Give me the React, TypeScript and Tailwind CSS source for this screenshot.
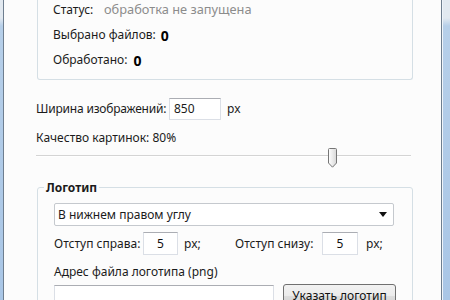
import React from "react";

const font = { fontFamily: '"Noto Sans", "Open Sans", sans-serif' };

function Thumb() {
  return (
    <svg width="11" height="20" viewBox="0 0 11 20" className="block">
      <defs>
        <linearGradient id="tg" x1="0" x2="1" y1="0" y2="0">
          <stop offset="0" stopColor="#ffffff" />
          <stop offset="1" stopColor="#d8d8d8" />
        </linearGradient>
      </defs>
      <path d="M1.5 1.5 Q1.5 0.5 2.5 0.5 H8.5 Q9.5 0.5 9.5 1.5 V15 L5.5 19.2 L1.5 15 Z" fill="url(#tg)" stroke="#767676" strokeWidth="1" />
    </svg>
  );
}

function TextBox({ w, value, center }: { w: string; value?: string; center?: boolean }) {
  return (
    <div
      className={`${w} shrink-0 h-[23px] border border-[#dbdfe6] border-t-[#abadb3] bg-white flex items-center ${center ? "justify-center" : "pl-[3px]"} text-[12px] text-[#111]`}
    >
      {value}
    </div>
  );
}

export default function App() {
  return (
    <div className="w-[450px] h-[300px] flex overflow-hidden text-[12px] text-[#1b1b1b] whitespace-nowrap" style={font}>
      <div className="w-[3px] shrink-0 h-full bg-[linear-gradient(to_bottom,#e2e9f0_0px,#e2e9f0_18px,#b6cfe9_26px,#a9c6e6_300px)]" />
      <div className="w-px shrink-0 h-full bg-[#6e7e8f]" />
      <div className="flex-1 h-full bg-[#fcfcfc] pl-[33px] pr-[28px] overflow-hidden">
        {/* status group */}
        <div className="w-[376px] border border-t-0 border-[#d5dfe5] rounded-b-[3px] pl-[15px] pb-[9px] flex flex-col gap-[5px]">
          <div className="h-[20px] flex items-center">
            <span className="w-[51px]">Статус:</span>
            <span className="text-[#8c8c8c] text-[12.8px]">обработка не запущена</span>
          </div>
          <div className="h-[20px] flex items-center">
            <span>Выбрано файлов:</span>
            <span className="ml-[5px] font-bold text-[14px] text-black">0</span>
          </div>
          <div className="h-[20px] flex items-center">
            <span>Обработано:</span>
            <span className="ml-[6px] font-bold text-[14px] text-black">0</span>
          </div>
        </div>

        {/* width */}
        <div className="mt-[18px] h-[22px] flex items-center -ml-px">
          <span className="w-[133px] shrink-0 tracking-[-0.2px]">Ширина изображений:</span>
          <div className="w-[52px] shrink-0 h-[22px] border border-[#dbdfe6] border-t-[#abadb3] bg-white flex items-center pl-[4px]">850</div>
          <span className="ml-[6px]">px</span>
        </div>

        <div className="mt-[10px] h-[16px] leading-[16px] -ml-px">Качество картинок: 80%</div>

        {/* slider */}
        <div className="mt-[2px] h-[20px] w-[375px] -ml-px relative">
          <div className="absolute left-0 right-0 top-[7px] h-[2px] bg-[#d4d4d4] border-b border-white" />
          <div className="absolute left-[291px] top-0">
            <Thumb />
          </div>
        </div>

        {/* logo group */}
        <fieldset className="mt-[12px] w-[376px] border border-[#d5dfe5] rounded-[3px]">
          <legend className="ml-[6px] px-[2px] font-bold text-[12px] leading-[15px] text-[#1b1b1b]">Логотип</legend>
          <div className="pl-[16px] pt-[8px] pb-[10px]">
            <div className="w-[340px] h-[23px] border border-[#c5c9ce] rounded-[2px] bg-white flex items-center pl-[3px] pr-[6px] justify-between">
              <span>В нижнем правом углу</span>
              <svg width="8" height="5" viewBox="0 0 8 5"><path d="M0 0 H8 L4 5 Z" fill="#111" /></svg>
            </div>
            <div className="mt-[6px] h-[23px] flex items-center">
              <span className="w-[89px] shrink-0">Отступ справа:</span>
              <TextBox w="w-[35px]" value="5" center />
              <span className="ml-[6px] w-[51px] shrink-0">px;</span>
              <span className="w-[87px] shrink-0">Отступ снизу:</span>
              <TextBox w="w-[36px]" value="5" center />
              <span className="ml-[8px]">px;</span>
            </div>
            <div className="mt-[9px] h-[16px] leading-[16px]">Адрес файла логотипа (png)</div>
            <div className="mt-[5px] flex items-start">
              <TextBox w="w-[220px]" />
              <div className="ml-[9px] mt-[-1px] w-[113px] shrink-0 h-[24px] border border-[#707070] rounded-[3px] bg-[linear-gradient(to_bottom,#f2f2f2_0%,#ebebeb_50%,#dddddd_51%,#cfcfcf_100%)] flex items-center justify-center text-[#111]">
                Указать логотип
              </div>
            </div>
          </div>
        </fieldset>
      </div>
      <div className="w-px shrink-0 h-full bg-[#6e7e8f]" />
      <div className="w-[8px] shrink-0 h-full bg-[linear-gradient(to_bottom,#e2e9f0_0px,#e2e9f0_18px,#b6cfe9_26px,#a9c6e6_300px)] border-l border-[#eef4fa]" />
    </div>
  );
}
